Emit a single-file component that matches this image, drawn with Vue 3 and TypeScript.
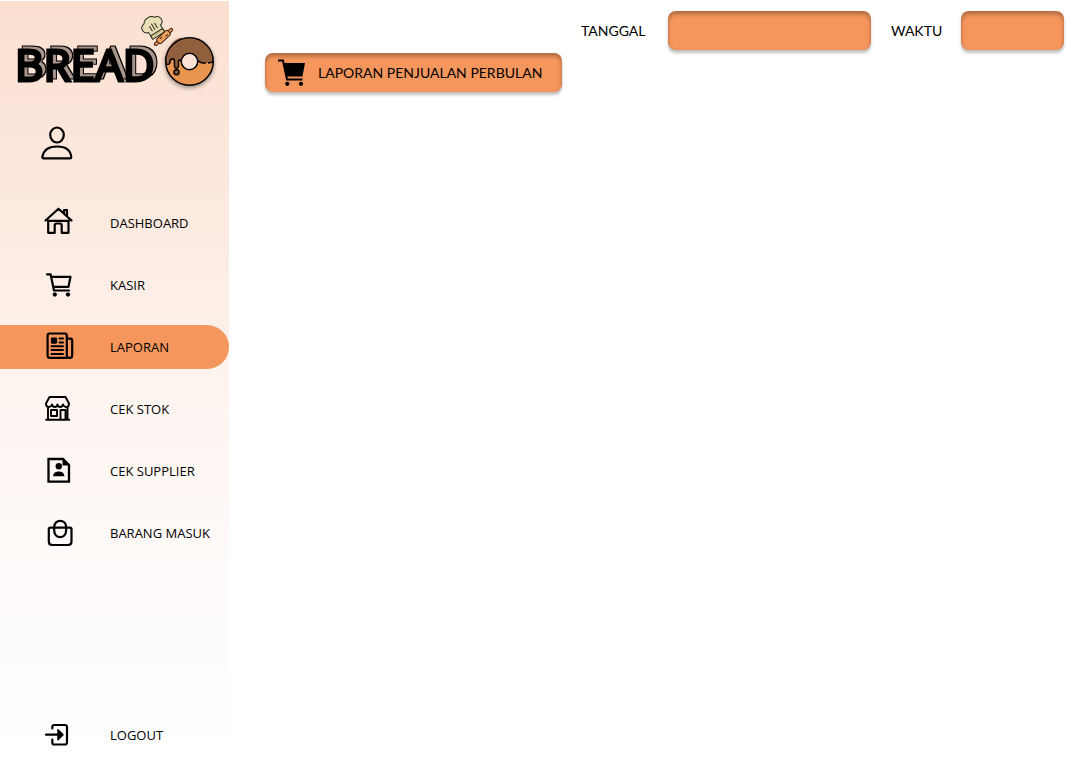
<script setup lang="ts">
import { ref } from 'vue'

interface MenuItem {
  id: string
  label: string
}

const items: MenuItem[] = [
  { id: 'dashboard', label: 'DASHBOARD' },
  { id: 'kasir', label: 'KASIR' },
  { id: 'laporan', label: 'LAPORAN' },
  { id: 'stok', label: 'CEK STOK' },
  { id: 'supplier', label: 'CEK SUPPLIER' },
  { id: 'barang', label: 'BARANG MASUK' },
]

const active = ref('laporan')
const tanggal = ref('')
const waktu = ref('')
</script>

<template>
  <div class="page">
    <aside class="sidebar">
      <div class="brand">
        <svg class="logo" viewBox="0 0 229 100" role="img" aria-label="BREAD O">
          <defs>
            <filter id="extrude" x="-5%" y="-10%" width="112%" height="120%" color-interpolation-filters="sRGB">
              <feOffset in="SourceAlpha" dx="4" dy="-3" result="edge" />
              <feMorphology in="edge" operator="erode" radius="1" result="inner" />
              <feFlood flood-color="#a8958b" />
              <feComposite in2="inner" operator="in" result="face" />
              <feMerge>
                <feMergeNode in="edge" />
                <feMergeNode in="face" />
                <feMergeNode in="SourceGraphic" />
              </feMerge>
            </filter>
          </defs>
          <text class="word" x="15" y="81" filter="url(#extrude)">BREAD</text>
          <!-- chef hat -->
          <g transform="translate(154 28) rotate(-32)" stroke="#2b2a20" stroke-width="1">
            <path d="M-7 8V1C-12 0-13-8-6-9-4-13 4-13 6-9 13-8 12 0 7 1V8Z" fill="#e9dfb4" />
            <path d="M-7 5H7V9H-7Z" fill="#d6c795" />
            <path d="M-3 2V-4M0 2V-5M3 2V-4" fill="none" />
          </g>
          <!-- rolling pin -->
          <g transform="translate(163.500 37) rotate(-43)" stroke="#3a2010" stroke-width="1">
            <rect x="-12" y="-1.500" width="24" height="3" rx="1.500" fill="#e8934f" />
            <rect x="-7.500" y="-3" width="15" height="6" rx="1.500" fill="#f0a15c" />
            <path d="M-4-1H-1M2 1H5" fill="none" />
          </g>
          <!-- donut -->
          <g class="donut">
            <circle cx="189.500" cy="61.500" r="23.800" fill="#e99550" />
            <path d="M165.700 63A23.800 23.800 0 1 1 213.300 62L207 63 202 62 197 62 189 52 180 62C180 58 178 60 178.500 65 178 69 174.500 69 174.500 65V61C173 58 171 60 171 63 169 66 167 63 165.700 63Z" fill="#925f3d" />
            <path d="M166 61C167 50 173 42 181 39" fill="none" stroke="#a76d4b" stroke-width="3" />
            <path d="M166 64C169 65 170 64 170 61 171 58 174 58 174.500 61V66C175 69 178 69 178.500 66V61C179 59 180 60 181 61M198 61 202 63H206M208 63 213 62" fill="none" stroke="#000" stroke-width="1.500" />
            <circle cx="176.500" cy="72.300" r="2.500" fill="#925f3d" stroke="#000" stroke-width="1.500" />
            <circle cx="189.500" cy="61.500" r="8.200" fill="#fbe4d6" stroke="#000" stroke-width="1.500" />
            <circle cx="189.500" cy="61.500" r="23.800" fill="none" stroke="#000" stroke-width="1.500" />
          </g>
        </svg>
      </div>

      <button class="profile" type="button" aria-label="Profil">
        <svg viewBox="0 0 34 36" width="34" height="36">
          <g fill="none" stroke="#000" stroke-width="2.200" stroke-linejoin="round">
            <ellipse cx="17" cy="10" rx="6.800" ry="7.500" />
            <path d="M3.500 33.400Q2.300 33.400 2.300 32C3.500 25 9 21.500 17 21.500S30.500 25 31.300 32Q31.300 33.400 30 33.400Z" />
          </g>
        </svg>
      </button>

      <nav class="menu">
        <a
          v-for="item in items"
          :key="item.id"
          href="#"
          class="item"
          :class="{ active: item.id === active }"
          @click.prevent="active = item.id"
        >
          <svg class="icon" viewBox="0 0 32 32" fill="none" stroke="#000" stroke-width="2.200" stroke-linejoin="round" stroke-linecap="round">
            <template v-if="item.id === 'dashboard'">
              <path d="M3.500 13.500 16.500 1.700 29.500 13.500M6 13.800H27M6.200 13.500V25.800H12.700V18.500Q12.700 16.500 14.500 16.500H18Q19.700 16.500 19.700 18.500V25.800H26.500V13.500M22 6.500V3H25V9.500" />
            </template>
            <template v-else-if="item.id === 'kasir'">
              <path d="M5 5.300H8.600L12 21.500H27M9.500 7.800H28.500L26.500 17.800H11.500" />
              <circle cx="12.800" cy="25.500" r="1.700" fill="#000" stroke-width="1" />
              <circle cx="26" cy="25.500" r="1.700" fill="#000" stroke-width="1" />
            </template>
            <template v-else-if="item.id === 'laporan'">
              <path d="M24.500 26.900H8Q5.600 26.900 5.600 24.500V4.500Q5.600 2.500 7.600 2.500H22.800Q24.800 2.500 24.800 4.500V24.500Q24.800 26.900 27.500 26.900 30.200 26.900 30.200 24.500V9.500Q30.200 7.600 28.500 7.600H25" />
              <rect x="10" y="7.600" width="4" height="4" fill="#000" />
              <path stroke-width="2" d="M17.500 7.500H21M17.500 11.500H21M9.500 15.300H21M9.500 19.100H21M9.500 23H21" />
            </template>
            <template v-else-if="item.id === 'stok'">
              <path stroke-width="1.900" d="M7.500 4H23.500L27 10.500Q27 14 24.500 14 22 14 21 11.500 20.500 14 18 14 16 14 15.500 11.500 15 14 12.800 14 10.500 14 10 11.500 9 14 6.500 14 4 14 4 10.500ZM6 14.500V26.800M25.500 14.500V26.800M4.200 26.800H27.300M9 17H15V23H9ZM18.500 26.500V17H23.500V26.500" />
            </template>
            <template v-else-if="item.id === 'supplier'">
              <path stroke-linejoin="miter" stroke-width="2.300" d="M6.500 4H21L27 10V26.700H6.500Z" />
              <path stroke="none" fill="#000" d="M20.500 3.500V10.500H27.500Z" />
              <circle cx="16.800" cy="11.300" r="3.200" fill="#000" stroke="none" />
              <path stroke="none" fill="#000" d="M11 21.200C11.500 17.500 14 16.500 16.800 16.500S22 17.500 22.500 21.200Z" />
            </template>
            <template v-else>
              <path d="M8.500 10.600H28Q29.500 10.600 29.500 12V24.500Q29.500 28 26 28H10.300Q6.800 28 6.800 24.500V12Q6.800 10.600 8.500 10.600ZM12.200 10C12.200 1.800 24.100 1.800 24.100 10V13.500C24.100 22.300 12.200 22.300 12.200 13.500Z" />
            </template>
          </svg>
          <span>{{ item.label }}</span>
        </a>
      </nav>

      <a href="#" class="item logout" @click.prevent>
        <svg class="icon" viewBox="0 0 32 32" fill="none" stroke="#000" stroke-width="2.200" stroke-linejoin="round" stroke-linecap="round">
          <path d="M10.300 9.500V8Q10.300 6 12.300 6H22.800Q25 6 25 8V23.500Q25 25.500 22.800 25.500H12.300Q10.300 25.500 10.300 23.500V20.500M4 15.700H16" />
          <path d="M16 10.700 21 15.700 16 20.700Z" fill="#000" stroke-width="1.500" />
        </svg>
        <span>LOGOUT</span>
      </a>
    </aside>

    <main class="content">
      <div class="topbar">
        <label for="tanggal" class="lbl-date">TANGGAL</label>
        <input id="tanggal" v-model="tanggal" class="box date" type="text" readonly />
        <label for="waktu" class="lbl-time">WAKTU</label>
        <input id="waktu" v-model="waktu" class="box time" type="text" readonly />
      </div>
      <button class="box report" type="button">
        <svg viewBox="0 0 28 28" width="28" height="28">
          <path d="M0 1.500H5L9 20.500H24.500" fill="none" stroke="#000" stroke-width="2" />
          <path d="M5 4H27L24.500 17.500H8Z" />
          <circle cx="9.300" cy="24.800" r="2.100" />
          <circle cx="23" cy="24.800" r="2.100" />
        </svg>
        <span>LAPORAN PENJUALAN PERBULAN</span>
      </button>
    </main>
  </div>
</template>

<style>
body {
  margin: 0;
  background: #fff;
}
</style>

<style scoped>
.page {
  display: flex;
  min-height: 100vh;
  font-family: "Open Sans", "Noto Sans", sans-serif;
  color: #000;
}
.sidebar {
  box-sizing: border-box;
  width: 229px;
  flex: none;
  display: flex;
  flex-direction: column;
  padding-bottom: 12px;
  background: linear-gradient(#fff 1px, #fbe0d0 1px, #fcebe2 31%, #fef5f1 53%, #fefbfa 75%, #fefdfd 96%, #fff 96%);
}
.brand {
  height: 100px;
}
.logo {
  display: block;
  width: 100%;
}
.word {
  font-size: 44px;
  stroke: #000;
  stroke-width: 3px;
}
.donut {
  filter: drop-shadow(0 2px 2px rgba(0, 0, 0, 0.4));
}
.profile {
  align-self: flex-start;
  margin: 25px 0 0 40px;
  padding: 0;
  border: 0;
  background: none;
  line-height: 0;
  cursor: pointer;
}
.menu {
  display: flex;
  flex-direction: column;
  gap: 18px;
  margin-top: 40px;
}
.item {
  display: flex;
  align-items: center;
  gap: 36px;
  height: 44px;
  padding-left: 42px;
  border-radius: 0 22px 22px 0;
  color: #000;
  font-size: 13px;
  text-decoration: none;
}
.item.active {
  background: #f5965c;
}
.icon {
  width: 32px;
  height: 32px;
}
.logout {
  margin-top: auto;
}
.content {
  flex: 1;
  padding: 11px 17px 0 36px;
  font-family: Lato, "Open Sans", sans-serif;
}
.topbar {
  display: flex;
  align-items: center;
  justify-content: flex-end;
  font-size: 14px;
}
.lbl-date {
  width: 87px;
}
.lbl-time {
  width: 70px;
  margin-left: 20px;
}
.box {
  box-sizing: border-box;
  height: 39px;
  border: 0;
  border-radius: 8px;
  background: #f5965c;
  box-shadow: 0 3px 3px rgba(0, 0, 0, 0.25), inset 0 3px 4px rgba(0, 0, 0, 0.3);
  font: inherit;
  color: #000;
}
.date {
  width: 203px;
}
.time {
  width: 103px;
}
.report {
  display: flex;
  align-items: center;
  gap: 12px;
  margin-top: 3px;
  padding: 0 20px 0 13px;
  font-size: 14px;
  cursor: pointer;
}
</style>
